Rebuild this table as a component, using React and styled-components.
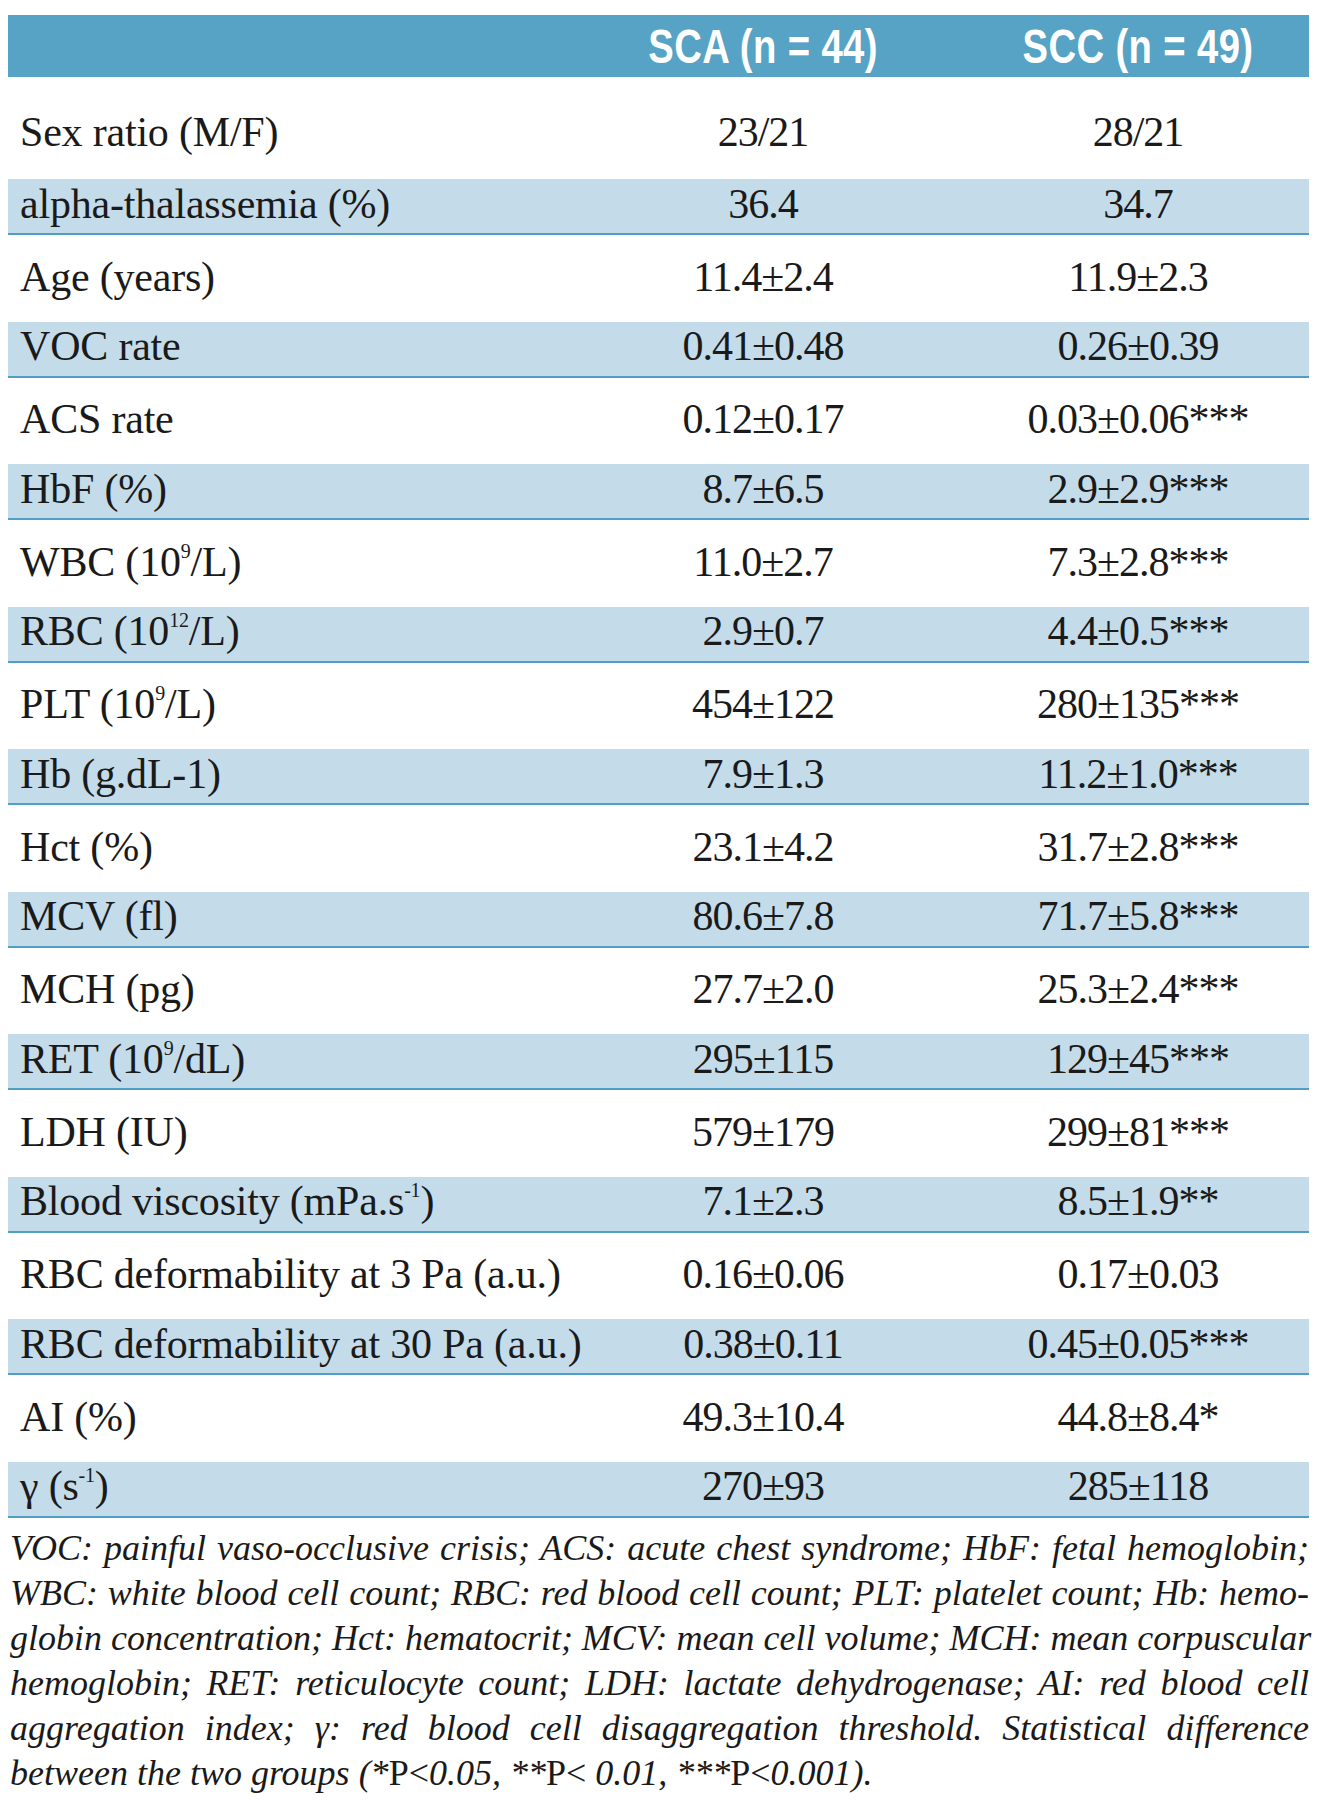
import React from 'react';
import styled, { createGlobalStyle } from 'styled-components';

const GlobalStyle = createGlobalStyle`
body {
  margin: 0;
  background: #ffffff;
}
`;

const Page = styled.div`
  padding: 15px 9px 0 8px;
  color: #1a1a1a;
  font-family: "Liberation Serif", "Times New Roman", serif;
`;

const Table = styled.div`
  display: flex;
  flex-direction: column;
`;

const rowPadding = p => {
  if (p.first) return '8px 0 0';
  return p.shade ? '0 0 5px' : '0 0 3px';
};

const Row = styled.div`
  display: grid;
  grid-template-columns: 551px 408px 1fr;
  align-items: center;
  height: ${p => p.h}px;
  background: ${p => (p.shade ? '#c4dcea' : 'transparent')};
  border-bottom: ${p => (p.shade ? '2px solid #4f9fc6' : 'none')};
  box-sizing: border-box;
  padding: ${rowPadding};
`;

const HeadRow = styled.div`
  display: grid;
  grid-template-columns: 551px 408px 1fr;
  align-items: center;
  height: 62px;
  background: #56a3c5;
`;

const HeadCell = styled.div`
  text-align: center;
  color: #ffffff;
  font-family: "Liberation Sans", Arial, sans-serif;
  font-weight: 700;
  font-size: 49px;
  line-height: 1;
  white-space: nowrap;
  span {
    display: inline-block;
    transform: scaleX(0.78);
    letter-spacing: 0.5px;
  }
`;

const Label = styled.div`
  padding-left: 12px;
  font-size: 42px;
  line-height: 1;
  letter-spacing: -0.2px;
  white-space: nowrap;
`;

const Value = styled.div`
  text-align: center;
  font-size: 42px;
  line-height: 1;
  letter-spacing: -1px;
  white-space: nowrap;
`;

const Sup = styled.sup`
  font-size: 20px;
  line-height: 0;
  vertical-align: 18px;
`;

const Note = styled.div`
  margin-top: 8px;
  padding: 0 0 0 2px;
  font-style: italic;
  font-size: 36px;
  line-height: 45px;
`;

const NoteLine = styled.div`
  text-align: justify;
  text-align-last: ${p => (p.last ? 'left' : 'justify')};
  white-space: nowrap;
`;

const Roman = styled.span`
  font-style: normal;
`;

const rows = [
  ['Sex ratio (M/F)', '23/21', '28/21'],
  ['alpha-thalassemia (%)', '36.4', '34.7'],
  ['Age (years)', '11.4±2.4', '11.9±2.3'],
  ['VOC rate', '0.41±0.48', '0.26±0.39'],
  ['ACS rate', '0.12±0.17', '0.03±0.06***'],
  ['HbF (%)', '8.7±6.5', '2.9±2.9***'],
  [<>WBC (10<Sup>9</Sup>/L)</>, '11.0±2.7', '7.3±2.8***'],
  [<>RBC (10<Sup>12</Sup>/L)</>, '2.9±0.7', '4.4±0.5***'],
  [<>PLT (10<Sup>9</Sup>/L)</>, '454±122', '280±135***'],
  ['Hb (g.dL-1)', '7.9±1.3', '11.2±1.0***'],
  ['Hct (%)', '23.1±4.2', '31.7±2.8***'],
  ['MCV (fl)', '80.6±7.8', '71.7±5.8***'],
  ['MCH (pg)', '27.7±2.0', '25.3±2.4***'],
  [<>RET (10<Sup>9</Sup>/dL)</>, '295±115', '129±45***'],
  ['LDH (IU)', '579±179', '299±81***'],
  [<>Blood viscosity (mPa.s<Sup>-1</Sup>)</>, '7.1±2.3', '8.5±1.9**'],
  ['RBC deformability at 3 Pa (a.u.)', '0.16±0.06', '0.17±0.03'],
  ['RBC deformability at 30 Pa (a.u.)', '0.38±0.11', '0.45±0.05***'],
  ['AI (%)', '49.3±10.4', '44.8±8.4*'],
  [<>γ (s<Sup>-1</Sup>)</>, '270±93', '285±118'],
];

const rowHeight = i => {
  if (i === 0) return 102;
  return i % 2 === 1 ? 56 : 86.5;
};

export default function App() {
  return (
    <Page>
      <GlobalStyle />
      <Table>
        <HeadRow>
          <div />
          <HeadCell><span>SCA (n = 44)</span></HeadCell>
          <HeadCell><span>SCC (n = 49)</span></HeadCell>
        </HeadRow>
        {rows.map((r, i) => (
          <Row key={i} h={rowHeight(i)} shade={i % 2 === 1} first={i === 0}>
            <Label>{r[0]}</Label>
            <Value>{r[1]}</Value>
            <Value>{r[2]}</Value>
          </Row>
        ))}
      </Table>
      <Note>
        <NoteLine>VOC: painful vaso-occlusive crisis; ACS: acute chest syndrome; HbF: fetal hemoglobin;</NoteLine>
        <NoteLine>WBC: white blood cell count; RBC: red blood cell count; PLT: platelet count; Hb: hemo-</NoteLine>
        <NoteLine>globin concentration; Hct: hematocrit; MCV: mean cell volume; MCH: mean corpuscular</NoteLine>
        <NoteLine>hemoglobin; RET: reticulocyte count; LDH: lactate dehydrogenase; AI: red blood cell</NoteLine>
        <NoteLine>aggregation index; γ: red blood cell disaggregation threshold. Statistical difference</NoteLine>
        <NoteLine last>
          between the two groups (*<Roman>P&lt;</Roman>0.05, **<Roman>P&lt;</Roman> 0.01, ***<Roman>P&lt;</Roman>0.001).
        </NoteLine>
      </Note>
    </Page>
  );
}
